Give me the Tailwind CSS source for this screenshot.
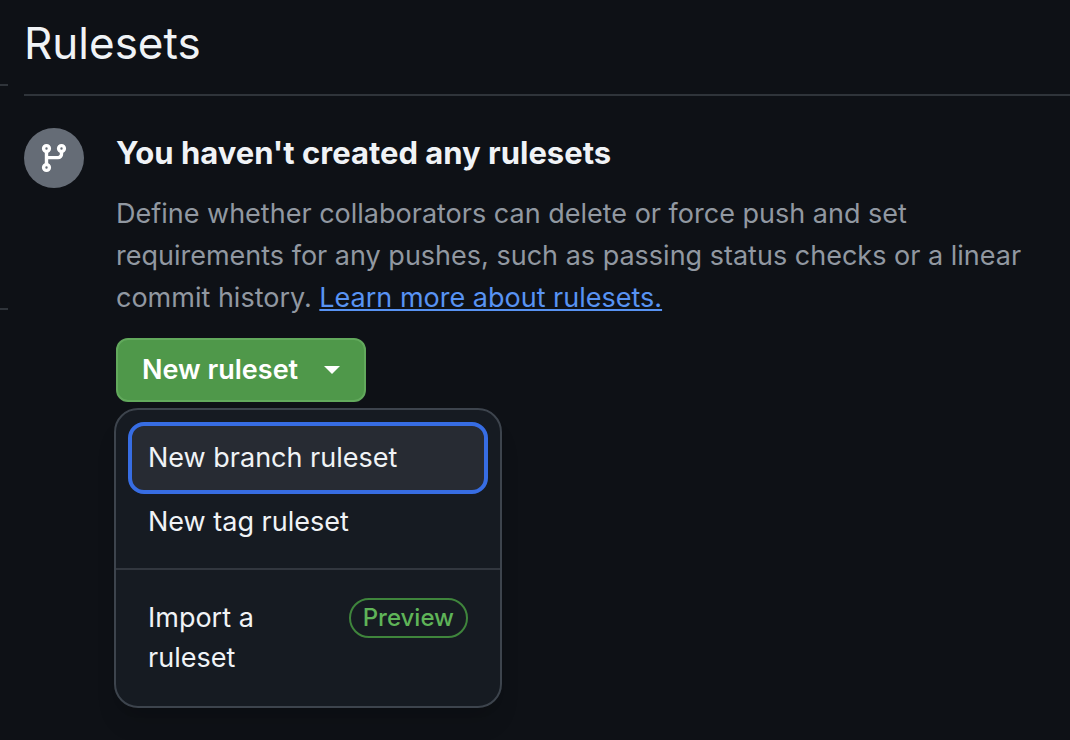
<!DOCTYPE html>
<html lang="en">
<head>
<meta charset="utf-8">
<meta name="viewport" content="width=device-width, initial-scale=1">
<title>Rulesets</title>
<script src="https://cdn.jsdelivr.net/npm/@tailwindcss/browser@4"></script>
</head>
<body class="min-h-screen bg-[#0e1116] font-['Inter',sans-serif] text-[#f0f3f6]">
<div class="flex">
  <aside class="w-2 shrink-0 pt-21" aria-hidden="true">
    <div class="h-56 border-t-2 border-[#2f343a]"></div>
    <div class="border-t-2 border-[#2f343a]"></div>
  </aside>
  <main class="min-w-0 flex-1 pl-4">
    <header class="border-b-2 border-[#2f343a] pt-4 pb-6">
      <h1 class="text-[44px] leading-[54px]">Rulesets</h1>
    </header>
    <section class="flex gap-8 pt-8 pr-8">
      <div class="flex size-15 shrink-0 items-center justify-center rounded-full bg-[#656c76]">
        <svg class="size-8" viewBox="0 0 16 16" fill="none" stroke="#fff" stroke-width="1.7" aria-hidden="true"><circle cx="4.25" cy="3.25" r="1.45"/><circle cx="11.75" cy="3.25" r="1.45"/><circle cx="4.25" cy="12.75" r="1.45"/><path d="M4.25 4.7v6.6M4.25 7.8H10A1.75 1.75 0 0 0 11.75 6V4.7"/></svg>
      </div>
      <div class="min-w-0 flex-1">
        <h2 class="text-[31px] leading-[50px] font-bold">You haven't created any rulesets</h2>
        <p class="mt-[15px] text-[27px] leading-[42px] text-[#9198a1]">Define whether collaborators can delete or force push and set requirements for any pushes, such as passing status checks or a linear commit history. <a href="#" class="text-[#5893f3] underline">Learn more about rulesets.</a></p>
        <div class="relative mt-[19px] w-fit">
          <button type="button" aria-haspopup="menu" aria-expanded="true" class="flex h-16 items-center gap-[26px] rounded-xl border-2 border-[#62a95c] bg-[#4f984a] px-6 text-[27px] font-semibold text-white">New ruleset
            <svg class="w-4" viewBox="0 0 16 8" fill="currentColor" aria-hidden="true"><path d="M0 0h16L8 8z"/></svg>
          </button>
          <ul role="menu" class="absolute top-full -left-0.5 mt-1.5 w-97 rounded-3xl border-2 border-[#3d444d] bg-[#161b22] pt-3 pb-4 text-[27px] leading-10 shadow-xl">
            <li role="none" class="px-3"><button type="button" role="menuitem" class="block w-full rounded-2xl border-4 border-[#376de3] bg-[#272b33] px-4 py-3 text-left">New branch ruleset</button></li>
            <li role="none" class="px-3"><button type="button" role="menuitem" class="block w-full px-5 py-2 text-left">New tag ruleset</button></li>
            <li role="separator" class="mt-[18px] mb-4 border-t-2 border-[#32373f]"></li>
            <li role="none" class="px-3"><button type="button" role="menuitem" class="flex w-full items-start justify-between px-5 py-3 text-left"><span class="w-32">Import a ruleset</span><span class="rounded-full border-2 border-[#3f853c] px-3 text-2xl leading-9 font-medium text-[#5fb458]">Preview</span></button></li>
          </ul>
        </div>
      </div>
    </section>
  </main>
</div>
</body>
</html>
